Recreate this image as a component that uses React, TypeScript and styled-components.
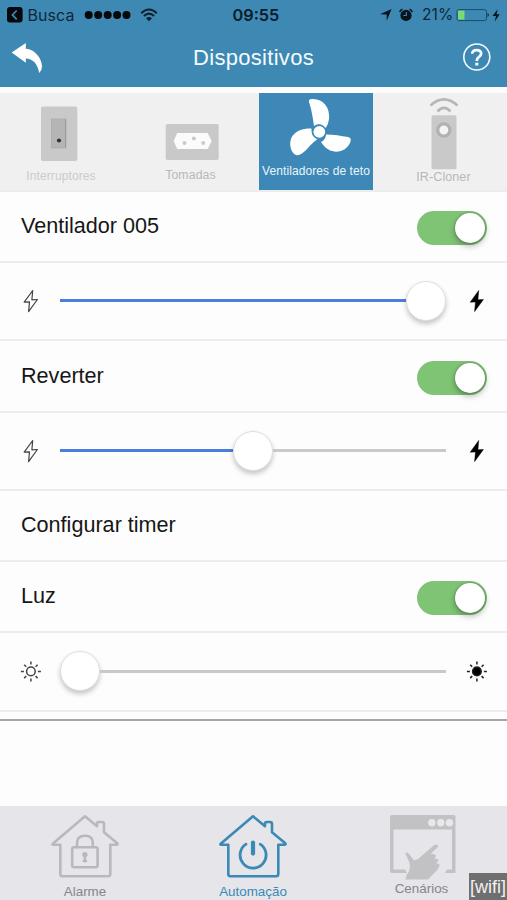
import React from 'react';
import styled, { createGlobalStyle } from 'styled-components';

const GlobalStyle = createGlobalStyle`
  * { box-sizing: border-box; }
  body {
    margin: 0;
    background: #fdfdfd;
    font-family: "Liberation Sans", Arial, sans-serif;
    color: #161616;
  }
  svg { display: block; flex: none; overflow: visible; }
`;

const Screen = styled.div`
  width: 507px;
  height: 900px;
  display: flex;
  flex-direction: column;
  overflow: hidden;
  position: relative;
`;

const Header = styled.header`
  flex: none;
  height: 87px;
  background: #3d89b4;
`;

const StatusBar = styled.div`
  height: 29px;
  display: grid;
  grid-template-columns: 1fr 50px 1fr;
  align-items: center;
  font-family: Inter, sans-serif;
  font-size: 16px;
  color: #10273a;
`;

const StatusSide = styled.div<{ $end?: boolean }>`
  display: flex;
  align-items: center;
  height: 29px;
  justify-content: ${(p) => (p.$end ? 'flex-end' : 'flex-start')};
  padding: ${(p) => (p.$end ? '0 6px 0 0' : '0 0 0 7px')};
`;

const StatusText = styled.span<{ $width: number; $size: number }>`
  width: ${(p) => p.$width}px;
  font-size: ${(p) => p.$size}px;
  line-height: 20px;
  letter-spacing: 0.05px;
  white-space: nowrap;
`;

const Clock = styled.time`
  padding-left: 4px;
  text-align: center;
  font-weight: 600;
  font-size: 16.3px;
  line-height: 20px;
  color: #0c1c29;
`;

const NavBar = styled.div`
  height: 58px;
  display: grid;
  grid-template-columns: 60px 1fr 60px;
  align-items: center;
`;

const Title = styled.h1`
  margin: 0;
  text-align: center;
  font-size: 22px;
  font-weight: 400;
  line-height: 26px;
  letter-spacing: 0.3px;
  color: #f4fafd;
`;

const NavButton = styled.button<{ $end?: boolean }>`
  border: 0;
  background: none;
  padding: ${(p) => (p.$end ? '0 0 3px 15px' : '1px 0 0 10px')};
`;

const Tabs = styled.nav`
  flex: none;
  margin-top: 6px;
  height: 97px;
  display: grid;
  grid-template-columns: 122px 137px 114px 134px;
  background: #f0f0f0;
`;

const Tab = styled.div<{ $active?: boolean; $shift?: number }>`
  height: 96.5px;
  display: flex;
  flex-direction: column;
  align-items: center;
  padding-left: ${(p) => p.$shift ?? 0}px;
  background: ${(p) => (p.$active ? '#3d88b6' : 'transparent')};
`;

const TabLabel = styled.span<{ $top: number; $color: string; $size?: number }>`
  margin-top: ${(p) => p.$top}px;
  font-size: ${(p) => p.$size ?? 12}px;
  line-height: 14px;
  white-space: nowrap;
  letter-spacing: 0.1px;
  color: ${(p) => p.$color};
`;

const Row = styled.div<{ $height: number }>`
  flex: none;
  height: ${(p) => p.$height}px;
  border-top: 2px solid #ececec;
  display: flex;
  align-items: center;
  justify-content: space-between;
  padding: 3px 20px 0 21px;
`;

const RowLabel = styled.span`
  font-size: 21.6px;
  line-height: 26px;
  margin-bottom: 4px;
`;

const Switch = styled.button`
  width: 70.5px;
  height: 34px;
  border: 0;
  border-radius: 17px;
  padding: 2px;
  background: #7fc474;
  display: flex;
  justify-content: flex-end;
`;

const SwitchKnob = styled.span`
  width: 30px;
  height: 30px;
  border-radius: 50%;
  background: #fff;
  box-shadow: 0 3px 6px rgba(0, 0, 0, 0.3), 0 0 2px rgba(0, 0, 0, 0.35);
`;

const SliderRow = styled(Row)`
  display: grid;
  grid-template-columns: 20px 386px 20px;
  column-gap: 20px;
  justify-content: start;
  padding: 0 0 1px 20px;
`;

const Track = styled.div`
  height: 40px;
  display: flex;
  align-items: center;
`;

const TrackPart = styled.span<{ $filled?: boolean }>`
  height: 3px;
  background: ${(p) => (p.$filled ? '#4a7edc' : '#c9c9c9')};
  flex: ${(p) => (p.$filled ? 'none' : '1')};
`;

const Thumb = styled.span`
  flex: none;
  width: 40px;
  height: 40px;
  border: 1px solid #dedede;
  border-radius: 50%;
  background: #fff;
  box-shadow: 0 3px 5px rgba(0, 0, 0, 0.22);
`;

const ListEnd = styled.div`
  flex: none;
  height: 11px;
  border-top: 2px solid #ececec;
  border-bottom: 2px solid #a6a6a8;
`;

const BottomBar = styled.footer`
  margin-top: auto;
  flex: none;
  height: 94px;
  background: #e5e5ea;
  display: grid;
  grid-template-columns: 170px 166px 171px;
`;

const BottomItem = styled.div<{ $color: string; $lift?: number }>`
  display: flex;
  flex-direction: column;
  align-items: center;
  padding-top: 8px;
  color: ${(p) => p.$color};
  font-size: 13.4px;
  line-height: 16px;
  gap: ${(p) => 4 - (p.$lift ?? 0)}px;
`;

const WifiTag = styled.div`
  position: absolute;
  right: 0;
  bottom: 0;
  width: 38px;
  height: 27px;
  background: #6f6f6f;
  color: #f2f2f2;
  font-size: 18px;
  line-height: 28px;
  text-align: center;
  white-space: nowrap;
`;

const BackChip = () => (
  <svg width="16" height="16" viewBox="0 0 16 16">
    <rect width="15.6" height="15.6" rx="3" fill="#05090c" />
    <path d="M9.7 3.5 5.4 7.9l4.3 4.4" fill="none" stroke="#3d89b4" strokeWidth="1.7" />
  </svg>
);

const Signal = () => (
  <svg width="56" height="20" viewBox="0 0 56 20">
    {[4.7, 14.2, 23.7, 33.1, 42.5].map((x) => (
      <circle key={x} cx={x} cy="10" r="4" fill="#05090c" />
    ))}
  </svg>
);

const WifiIcon = () => (
  <svg width="18" height="20" viewBox="0 0 18 20" fill="none" stroke="#10202b" strokeWidth="2">
    <path d="M1.2 8.2Q9 .7 16.8 8.2M3.9 11Q9 6.2 14.1 11" />
    <path d="M6 13.2Q9 10.6 12 13.2L9 16.2Z" fill="#10202b" stroke="none" />
  </svg>
);

const StatusIcons = () => (
  <svg width="42" height="20" viewBox="0 0 42 20" fill="#08131b">
    <path d="M0 9.3 11.6 4.1 6.7 15.7V9.6Z" />
    <circle cx="26" cy="10.4" r="5.6" />
    <path d="M19.8 7.2Q20.2 4.8 22.5 4.2M32.2 7.2Q31.8 4.8 29.5 4.2" fill="none" stroke="#08131b" strokeWidth="1.5" />
    <path d="M26.3 7V10.5H23.4" fill="none" stroke="#3d89b4" strokeWidth="1.1" />
  </svg>
);

const Battery = () => (
  <svg width="45" height="20" viewBox="0 0 45 20">
    <rect x="1" y="4.6" width="29.5" height="11" rx="2" fill="none" stroke="#204a64" />
    <rect x="2" y="5.6" width="6.5" height="9" fill="#79db78" />
    <path d="M31.6 8Q34 10 31.6 12.2Z" fill="#10202b" />
    <path d="M41.7 4.2 36.5 11.1H40L38.7 16.5 43.7 9.2H40.5Z" fill="#08131b" />
  </svg>
);

const BackArrow = () => (
  <svg width="34" height="32" viewBox="0 0 34 32">
    <path d="M1.7 9.6 15.8 0V5.8C25 6.2 32 15.8 32 23.6Q32 27.6 29.2 30C27.8 21.4 23.4 15.7 15.8 15.5V19.7Z" fill="#fff" />
  </svg>
);

const HelpIcon = () => (
  <svg width="30" height="30" viewBox="0 0 30 30" fill="none" stroke="#f5fbff">
    <circle cx="14.8" cy="15" r="13" strokeWidth="1.6" />
    <path d="M10.2 11.8Q10.4 8.2 14.7 8.2T19.2 11.6Q19.2 13.4 17 14.9 14.8 16.3 14.8 18.9" strokeWidth="2.7" />
    <path d="M13.3 20.7h3v2.8h-3z" fill="#f5fbff" stroke="none" />
  </svg>
);

const SwitchPlate = () => (
  <svg width="38" height="70" viewBox="42 93 38 70">
    <rect x="41" y="106.6" width="36.3" height="54.4" rx="1.8" fill="#c9c9c9" />
    <rect x="51.5" y="119" width="14.5" height="29" fill="#b5b5b5" stroke="#a8a8a8" strokeWidth=".7" />
    <path d="M65.5 119.5v28" stroke="#999" strokeWidth="1" />
    <circle cx="59" cy="140.5" r="2.1" fill="#333" />
  </svg>
);

const Socket = () => (
  <svg width="54" height="70" viewBox="163.8 93 54 70">
    <rect x="165.5" y="124" width="53" height="36" rx="1.8" fill="#c9c9c9" />
    <path d="M177 133H207.5L211.5 141 207.5 149H177L173.5 141Z" fill="#fbfbfb" />
    <g fill="#cacaca"><circle cx="184.3" cy="143" r="2" /><circle cx="193.7" cy="138.5" r="2" /><circle cx="203" cy="143" r="2" /></g>
  </svg>
);

const Fan = () => (
  <svg width="64" height="70" viewBox="284 93 64 70" fill="#fff">
    <path d="M309.3 103Q307.7 99.2 312 99.1C323 98.6 330.1 107.5 329.1 118.7Q328.5 124 325.7 128Q319.7 121.6 314 126C312.8 117.8 311.8 110.3 309.3 103Z" />
    <path d="M311.5 128.6Q310.8 136.3 317.2 139.4C309 144.8 306.7 151.3 299.5 154.8Q295 156.5 292 151.3C286.6 138.7 294.5 128.1 311.5 128.6Z" />
    <path d="M326 134.5C333.8 134.5 341 135.9 348.1 137Q352 138 350.3 142.3C345.8 153.5 329.4 156.1 321 142Q325.6 140 326 134.5Z" />
    <circle cx="319.3" cy="131.8" r="6.6" stroke="#3d88b6" strokeWidth="1.4" />
  </svg>
);

const Remote = () => (
  <svg width="32" height="76" viewBox="427.5 93 32 76">
    <g fill="none" stroke="#b7b7b7" strokeWidth="2.7">
      <path d="M430 105.4Q443.5 93.3 457 105.4M437 111.5Q443.5 104.3 450 111.5" />
    </g>
    <rect x="431" y="115.3" width="25" height="54" rx="1.5" fill="#c9c9c9" />
    <circle cx="443.3" cy="130" r="6.1" fill="#f3f3f3" stroke="#b1b1b1" strokeWidth="3.2" />
  </svg>
);

const Bolt = ({ filled }: { filled?: boolean }) => (
  <svg width="20" height="26" viewBox="-0.5 0 20 26">
    <path
      d="M12.2 2.5 3.7 14.2 9 13.9 8.1 23.6 16.9 11.5 11.4 11.8Z"
      fill={filled ? '#000' : 'none'}
      stroke={filled ? '#000' : '#444'}
      strokeWidth={filled ? 0.5 : 1.2}
      strokeLinejoin="round"
    />
  </svg>
);

const Sun = ({ filled }: { filled?: boolean }) => (
  <svg width="20" height="20" viewBox="-0.4 -0.4 20 20" fill="none" stroke={filled ? '#222' : '#444'} strokeWidth="1.5">
    <circle cx="10.5" cy="10" r="4.3" fill={filled ? '#000' : 'none'} />
    <path d="M10.5 0v3M10.5 17v3M.5 10h3M17.5 10h3M3.8 3.3l2 2M15.2 14.7l2 2M17.2 3.3l-2 2M5.8 14.7l-2 2" />
  </svg>
);

const House = ({ children, color }: { children: React.ReactNode; color: string }) => (
  <svg width="70" height="66" viewBox="0 0 70 66" fill="none" stroke={color} strokeWidth="2.6" strokeLinejoin="round" strokeLinecap="round">
    <path d="M10.3 30.8H3Q1.7 30.6 3 29.4L35 2.3 47 12.2V9.4Q47 8 49 8H52Q54 8 54 10V18.2L67 29Q68.6 30.8 66 30.8H60.3V60Q60.3 62.3 58 62.3H12.5Q10.3 62.3 10.3 60Z" />
    {children}
  </svg>
);

const AlarmIcon = () => (
  <House color="#b9b9bd">
    <rect x="22.2" y="33.2" width="25.4" height="20" rx="2" />
    <path d="M27 33V29Q27 21.7 34.9 21.7T42.8 29V33" />
    <circle cx="34.9" cy="40.6" r="1.4" fill="#b9b9bd" />
    <path d="M34.9 41v6.2M33.8 47h2.2" />
  </House>
);

const AutomationIcon = () => (
  <House color="#3a8ab5">
    <path d="M28 30.2A13 13 0 1 0 42.2 30.2" strokeWidth="2.8" />
    <path d="M35 28.6V39.6" strokeWidth="4.2" />
  </House>
);

const SceneIcon = () => (
  <svg width="66" height="66" viewBox="389.5 814 66 66">
    <path d="M392.5 815H454Q456 815 456 817V873H445.5L447.5 869.5H452.5V829.5H394V869.5H405.3L407.5 873H392.5Q390.5 873 390.5 871V817Q390.5 815 392.5 815Z" fill="#c2c2c5" />
    <g fill="#e8e8ec"><circle cx="432.3" cy="822.8" r="3.7" /><circle cx="441.3" cy="822.8" r="3.7" /><circle cx="450" cy="822.8" r="3.7" /></g>
    <path d="M405.8 853.4Q407.5 851.4 409.8 854.2L414.3 860.2Q418 860.6 420.8 857L434.5 845.2Q437.7 843.3 438.8 846.2L431 854.2Q436 853.5 436.5 856.3L434.5 858.5Q438.8 858.2 439 860.5L436.5 863.2Q440.5 863.3 440 866L437.5 870.2 428.6 879.5H406L407 875Q411.4 870.6 410 862.5Z" fill="#c2c2c5" />
  </svg>
);

const ToggleRow = ({ label, height, toggle = true }: { label: string; height: number; toggle?: boolean }) => (
  <Row $height={height}>
    <RowLabel>{label}</RowLabel>
    {toggle && <Switch role="switch" aria-checked="true" aria-label={label}><SwitchKnob /></Switch>}
  </Row>
);

const LevelRow = ({ value, height, light }: { value: number; height: number; light?: boolean }) => (
  <SliderRow $height={height}>
    {light ? <Sun /> : <Bolt />}
    <Track>
      <TrackPart $filled style={{ width: value * 346 }} />
      <Thumb />
      <TrackPart />
    </Track>
    {light ? <Sun filled /> : <Bolt filled />}
  </SliderRow>
);

export default function App() {
  return (
    <>
      <GlobalStyle />
      <Screen>
        <Header>
          <StatusBar>
            <StatusSide>
              <BackChip />
              <StatusText $width={61} $size={16}>&nbsp;Busca</StatusText>
              <Signal />
              <WifiIcon />
            </StatusSide>
            <Clock>09:55</Clock>
            <StatusSide $end>
              <StatusIcons />
              <StatusText $width={34} $size={15.6}>21%</StatusText>
              <Battery />
            </StatusSide>
          </StatusBar>
          <NavBar>
            <NavButton aria-label="Voltar"><BackArrow /></NavButton>
            <Title>Dispositivos</Title>
            <NavButton $end aria-label="Ajuda"><HelpIcon /></NavButton>
          </NavBar>
        </Header>
        <Tabs>
          <Tab><SwitchPlate /><TabLabel $top={6} $color="#cbcbcb">Interruptores</TabLabel></Tab>
          <Tab><Socket /><TabLabel $top={5} $color="#b8b8b8" $size={12.3}>Tomadas</TabLabel></Tab>
          <Tab $active><Fan /><TabLabel $top={1} $color="#eaf5fc">Ventiladores de teto</TabLabel></Tab>
          <Tab $shift={7}><Remote /><TabLabel $top={1} $color="#b8b8b8" $size={12.5}>IR-Cloner</TabLabel></Tab>
        </Tabs>
        <ToggleRow label="Ventilador 005" height={71} />
        <LevelRow value={1} height={78} />
        <ToggleRow label="Reverter" height={72} />
        <LevelRow value={0.5} height={78} />
        <ToggleRow label="Configurar timer" height={71} toggle={false} />
        <ToggleRow label="Luz" height={71} />
        <LevelRow value={0} height={79} light />
        <ListEnd />
        <BottomBar>
          <BottomItem $color="#86868a"><AlarmIcon />Alarme</BottomItem>
          <BottomItem $color="#3a8ab5"><AutomationIcon />Automação</BottomItem>
          <BottomItem $color="#86868a" $lift={3}><SceneIcon />Cenários</BottomItem>
        </BottomBar>
        <WifiTag>[wifi]</WifiTag>
      </Screen>
    </>
  );
}
